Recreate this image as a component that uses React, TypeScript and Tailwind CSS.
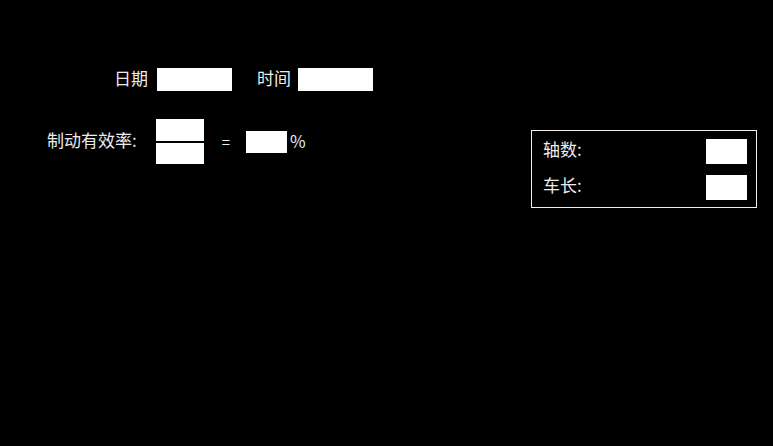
const font = { fontFamily: '"Noto Sans CJK SC", "Noto Sans", sans-serif' };

function Box({ className }: { className: string }) {
  return <div className={`bg-white ${className}`} />;
}

export default function App() {
  return (
    <div className="w-[773px] h-[446px] bg-black text-[#ececec] overflow-hidden" style={font}>
      {/* date / time row */}
      <div className="flex items-center pt-[68px] pl-[114px] text-[17px] leading-none">
        <span className="-translate-y-[2px]">日期</span>
        <Box className="ml-[9px] w-[75px] h-[23px]" />
        <span className="ml-[25px] -translate-y-[2px]">时间</span>
        <Box className="ml-[7px] w-[75px] h-[23px]" />
      </div>

      <div className="flex items-start mt-[28px]">
        {/* braking efficiency */}
        <div className="flex items-center pl-[47px] text-[17px] leading-none">
          <span className="-translate-y-[2px]">制动有效率:</span>
          <div className="flex flex-col gap-[2px] ml-[19px]">
            <Box className="w-[48px] h-[22px]" />
            <Box className="w-[48px] h-[21px]" />
          </div>
          <span className="ml-[18px] text-[15px]">=</span>
          <Box className="ml-[16px] w-[41px] h-[22px]" />
          <span className="ml-[3px] -translate-y-[1px]">%</span>
        </div>

        {/* axle panel */}
        <div className="ml-auto mr-[16px] mt-[11px] w-[226px] h-[78px] border border-[#eeeeee] flex flex-col gap-[11px] pt-[8px] pl-[11px] pr-[9px] text-[17px] leading-none">
          <div className="flex items-center justify-between">
            <span className="-translate-y-[3px]">轴数:</span>
            <Box className="w-[41px] h-[25px]" />
          </div>
          <div className="flex items-center justify-between">
            <span className="-translate-y-[3px]">车长:</span>
            <Box className="w-[41px] h-[25px]" />
          </div>
        </div>
      </div>
    </div>
  );
}
